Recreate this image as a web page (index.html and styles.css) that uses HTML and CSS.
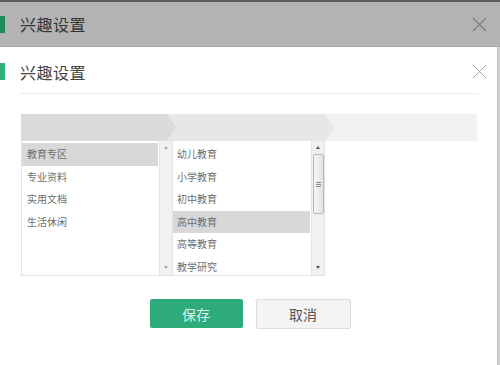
FILE: index.html
```html
<!DOCTYPE html>
<html lang="zh">
<head>
<meta charset="utf-8">
<title>兴趣设置</title>
<link rel="stylesheet" href="styles.css">
</head>
<body>
<div class="topstrip"></div>
<div class="behind-head">
  <span class="mark mark-dim"></span>
  <span class="title">兴趣设置</span>
  <svg class="close" width="15" height="15" viewBox="0 0 15 15"><path d="M1 1L14 14M14 1L1 14" stroke="#7c7c7c" stroke-width="1.2" fill="none"/></svg>
</div>
<div class="dialog">
  <div class="head">
    <span class="mark"></span>
    <span class="title">兴趣设置</span>
    <svg class="close" width="15" height="15" viewBox="0 0 15 15"><path d="M1 1L14 14M14 1L1 14" stroke="#a8a8a8" stroke-width="1" fill="none"/></svg>
  </div>
  <div class="divider"></div>
  <svg class="crumbs" width="456" height="27" viewBox="0 0 456 27">
    <rect x="0" y="0" width="456" height="27" fill="#f2f2f2"/>
    <polygon points="0,0 304,0 314,13.5 304,27 0,27" fill="#e7e7e7"/>
    <polygon points="0,0 145,0 155,13.5 145,27 0,27" fill="#dadada"/>
  </svg>
  <div class="lists">
    <div class="listbox">
      <ul class="items">
        <li class="sel">教育专区</li>
        <li>专业资料</li>
        <li>实用文档</li>
        <li>生活休闲</li>
      </ul>
      <div class="scroll disabled">
        <span class="arr up"></span>
        <span class="arr down"></span>
      </div>
    </div>
    <div class="listbox">
      <ul class="items">
        <li>幼儿教育</li>
        <li>小学教育</li>
        <li>初中教育</li>
        <li class="sel">高中教育</li>
        <li>高等教育</li>
        <li>教学研究</li>
      </ul>
      <div class="scroll">
        <span class="arr up"></span>
        <span class="thumb"><span class="grip"></span></span>
        <span class="arr down"></span>
      </div>
    </div>
  </div>
  <div class="actions">
    <button class="btn save">保存</button>
    <button class="btn cancel">取消</button>
  </div>
</div>
</body>
</html>
```
FILE: styles.css
```css
html, body {
  margin: 0;
  padding: 0;
}
body {
  width: 500px;
  height: 365px;
  overflow: hidden;
  background: #cfcfcf;
  font-family: "Noto Sans CJK SC", "Noto Sans", sans-serif;
}
.topstrip {
  height: 2px;
  background: #5c5c5c;
}
.behind-head {
  height: 44px;
  background: #b3b3b3;
  border-bottom: 1px solid #a6a6a6;
  display: flex;
  align-items: center;
}
.mark {
  display: block;
  width: 5px;
  height: 17px;
  background: #2db27e;
  margin-right: 15px;
}
.mark-dim {
  background: #1f8a5a;
}
.title {
  font-size: 16px;
  line-height: 20px;
  color: #444;
  letter-spacing: 0.5px;
}
.behind-head .title {
  color: #343434;
}
.close {
  margin-left: auto;
  margin-right: 13px;
  display: block;
}
.dialog {
  width: 497px;
  height: 318px;
  background: #fff;
  border-right: 1px solid #c4c4c4;
}
.head {
  height: 46px;
  padding-top: 3px;
  box-sizing: border-box;
  display: flex;
  align-items: center;
}
.head .close {
  margin-right: 10px;
}
.divider {
  height: 1px;
  margin: 0 19px 0 20px;
  background: #ececec;
}
.crumbs {
  display: block;
  margin: 20px 0 0 21px;
}
.lists {
  display: flex;
  margin-left: 21px;
}
.listbox {
  width: 152px;
  height: 135px;
  box-sizing: border-box;
  border: 1px solid #e3e3e3;
  border-top: none;
  display: flex;
  background: #fff;
}
.listbox + .listbox {
  border-left: none;
}
.items {
  flex: 1;
  list-style: none;
  margin: 0;
  padding: 2px 0 0 0;
  overflow: hidden;
}
.items li {
  height: 22.6px;
  line-height: 22.6px;
  font-size: 10px;
  color: #6e6e6e;
  padding-left: 5px;
  margin-right: 1px;
  white-space: nowrap;
}
.listbox + .listbox .items li {
  padding-left: 4px;
}
.items li.sel {
  background: #d8d8d8;
}
.scroll {
  width: 13px;
  background: #f1f1f1;
  border-left: 1px solid #e6e6e6;
  display: flex;
  flex-direction: column;
  align-items: center;
  padding: 5px 0 6px;
  box-sizing: border-box;
}
.arr {
  width: 0;
  height: 0;
  border-left: 2.5px solid transparent;
  border-right: 2.5px solid transparent;
}
.arr.up {
  border-bottom: 3px solid #555;
}
.arr.down {
  border-top: 3px solid #555;
  margin-top: auto;
}
.scroll.disabled .arr.up {
  border-bottom-color: #a8a8a8;
}
.scroll.disabled .arr.down {
  border-top-color: #a8a8a8;
}
.thumb {
  width: 11px;
  height: 60px;
  margin-top: 5px;
  box-sizing: border-box;
  border: 1px solid #b8b8b8;
  border-radius: 2px;
  background: linear-gradient(to right, #f7f7f7, #e2e2e2);
  display: flex;
  align-items: center;
  justify-content: center;
}
.grip {
  width: 5px;
  height: 5px;
  border-top: 1px solid #8a8a8a;
  border-bottom: 1px solid #8a8a8a;
  box-sizing: border-box;
  background: linear-gradient(#8a8a8a, #8a8a8a) center / 5px 1px no-repeat;
}
.actions {
  display: flex;
  justify-content: center;
  gap: 13px;
  margin-top: 23px;
  width: 500px;
}
.btn {
  font-family: "Noto Sans CJK SC", "Noto Sans", sans-serif;
  font-size: 14px;
  border-radius: 2px;
  padding: 0;
  box-sizing: border-box;
  cursor: pointer;
}
.btn.save {
  width: 93px;
  height: 29px;
  border: none;
  background: #2eab7b;
  color: #dff3ea;
}
.btn.cancel {
  width: 95px;
  height: 30px;
  border: 1px solid #dcdcdc;
  background: #f4f4f4;
  color: #555;
}
```
